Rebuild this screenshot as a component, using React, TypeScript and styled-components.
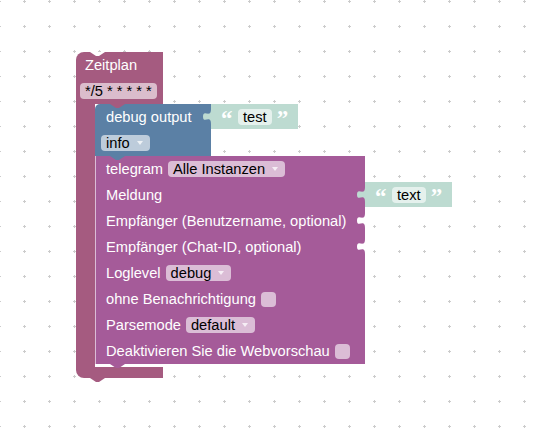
import React from 'react';
import styled, { createGlobalStyle } from 'styled-components';

const C = {
  schedule: '#a55b80',
  scheduleField: '#dbbdcc',
  debug: '#5b80a5',
  debugField: '#bdccdb',
  telegram: '#a55b99',
  telegramField: '#dbbdd6',
  text: '#bddbd1',
  textField: '#e5f1ed',
};

const GlobalStyle = createGlobalStyle`
  html, body { margin: 0; padding: 0; background: #fff; }
  body { font-family: "Liberation Sans", Arial, sans-serif; }
  * { box-sizing: border-box; }
`;

const Workspace = styled.div`
  position: relative;
  width: 535px;
  height: 444px;
  overflow: hidden;
  background: #fff;
`;

const GridLayer = styled.svg`
  position: absolute;
  inset: 0;
  width: 100%;
  height: 100%;
  display: block;
`;

const Script = styled.div`
  position: absolute;
  left: 76px;
  top: 52px;
  display: flex;
  flex-direction: column;
`;

const ScheduleHead = styled.div`
  position: relative;
  width: 87px;
  height: 52px;
  background: ${C.schedule};
  border-top-left-radius: 8px;
  display: flex;
  flex-direction: column;
`;

const HeadRow = styled.div<{ $pad: number }>`
  height: 26px;
  display: flex;
  align-items: center;
  padding-left: ${(p) => p.$pad}px;
`;

const ScheduleBody = styled.div`
  display: flex;
  align-items: stretch;
`;

const Arm = styled.div`
  width: 19px;
  background: ${C.schedule};
`;

const Stack = styled.div`
  display: flex;
  flex-direction: column;
  align-items: flex-start;
  padding-bottom: 3px;
`;

const ScheduleFoot = styled.div`
  position: relative;
  width: 87px;
  height: 11px;
  background: ${C.schedule};
  border-bottom-left-radius: 8px;
`;

const Notch = styled.span<{ $color: string; $kind: 'dip' | 'bump'; $offset?: number }>`
  position: absolute;
  left: ${(p) => p.$offset ?? 15}px;
  width: 15px;
  height: 4px;
  background: ${(p) => p.$color};
  clip-path: polygon(0 0, 100% 0, 60% 100%, 40% 100%);
  z-index: 3;
  ${(p) => (p.$kind === 'dip' ? 'top: 0;' : 'bottom: -4px;')}
`;

const Block = styled.div<{ $color: string; $width: number; $rounded?: boolean; $highlight?: boolean }>`
  position: relative;
  width: ${(p) => p.$width}px;
  background: ${(p) => p.$color};
  display: flex;
  flex-direction: column;
  border-top-left-radius: ${(p) => (p.$rounded ? 5 : 0)}px;
  box-shadow: ${(p) => (p.$highlight ? 'inset 1px 0 0 rgba(255,255,255,0.6)' : 'none')};
`;

const InputRow = styled.div<{ $pad: number; $h?: number }>`
  position: relative;
  height: ${(p) => p.$h ?? 26}px;
  display: flex;
  align-items: center;
  gap: 5px;
  padding-left: ${(p) => p.$pad}px;
  white-space: nowrap;
`;

const Label = styled.span`
  color: #fff;
  font-size: 14.67px;
  line-height: 16px;
`;

const Field = styled.span<{ $bg: string }>`
  display: inline-flex;
  align-items: center;
  height: 16px;
  padding: 0 5px;
  border-radius: 4px;
  background: ${(p) => p.$bg};
  color: #000;
  font-size: 14.67px;
  line-height: 16px;
`;

const DropField = styled(Field)`
  padding-right: 7px;
`;

const DropArrow = styled.span`
  display: inline-block;
  width: 0;
  height: 0;
  margin-left: 7px;
  border-left: 3px solid transparent;
  border-right: 3px solid transparent;
  border-top: 4px solid rgba(255, 255, 255, 0.75);
`;

const CheckBox = styled.span<{ $bg: string }>`
  display: inline-block;
  width: 15px;
  height: 15px;
  border-radius: 4px;
  background: ${(p) => p.$bg};
`;

const ValueBlock = styled.div`
  position: absolute;
  left: 100%;
  top: 0;
  height: 25px;
  display: flex;
  align-items: center;
  padding: 0 9px 0 10px;
  background: ${C.text};
  z-index: 2;
`;

const Quote = styled.span<{ $close?: boolean }>`
  width: 12px;
  height: 25px;
  margin-right: ${(p) => (p.$close ? 0 : 5)}px;
  margin-left: ${(p) => (p.$close ? 5 : 0)}px;
  color: #fff;
  font-family: "Liberation Serif", "Times New Roman", serif;
  font-weight: bold;
  font-size: 23px;
  line-height: 30px;
  text-align: left;
  overflow: visible;
`;

const TabShape = styled.svg<{ $side: 'in' | 'out' }>`
  position: absolute;
  top: 0;
  width: 8px;
  height: 20px;
  display: block;
  ${(p) => (p.$side === 'out' ? 'left: -8px;' : 'right: 0;')}
`;

const TAB_PATH = 'M8,5 C8,15 0,4.5 0,12.5 S8,10 8,20 Z';

function Tab({ side, fill }: { side: 'in' | 'out'; fill: string }) {
  return (
    <TabShape $side={side} viewBox="0 0 8 20" aria-hidden>
      <path d={TAB_PATH} fill={fill} />
    </TabShape>
  );
}

function TextValue({ value }: { value: string }) {
  return (
    <ValueBlock>
      <Tab side="out" fill={C.text} />
      <Quote>“</Quote>
      <Field $bg={C.textField}>{value}</Field>
      <Quote $close>”</Quote>
    </ValueBlock>
  );
}

function Dropdown({ bg, children }: { bg: string; children: React.ReactNode }) {
  return (
    <DropField $bg={bg}>
      {children}
      <DropArrow />
    </DropField>
  );
}

function Grid() {
  return (
    <GridLayer aria-hidden>
      <defs>
        <pattern id="ws-grid" width="25" height="25" patternUnits="userSpaceOnUse" x="12" y="-11">
          <rect x="11" y="12" width="3" height="1" fill="#cccccc" />
          <rect x="12" y="11" width="1" height="3" fill="#cccccc" />
        </pattern>
      </defs>
      <rect width="100%" height="100%" fill="url(#ws-grid)" />
    </GridLayer>
  );
}

export default function App() {
  return (
    <>
      <GlobalStyle />
      <Workspace>
        <Grid />
        <Script>
          <ScheduleHead>
            <Notch $kind="dip" $color="#fff" $offset={14} />
            <HeadRow $pad={9}>
              <Label>Zeitplan</Label>
            </HeadRow>
            <HeadRow $pad={4}>
              <Field $bg={C.scheduleField}>*/5 * * * * *</Field>
            </HeadRow>
          </ScheduleHead>
          <ScheduleBody>
            <Arm />
            <Stack>
              <Block $color={C.debug} $width={116} $rounded>
                <Notch $kind="dip" $color={C.schedule} />
                <InputRow $pad={11}>
                  <Label>debug output</Label>
                  <TextValue value="test" />
                </InputRow>
                <InputRow $pad={6}>
                  <Dropdown bg={C.debugField}>info</Dropdown>
                </InputRow>
                <Notch $kind="bump" $color={C.debug} />
              </Block>
              <Block $color={C.telegram} $width={270} $highlight>
                <InputRow $pad={11}>
                  <Label>telegram</Label>
                  <Dropdown bg={C.telegramField}>Alle Instanzen</Dropdown>
                </InputRow>
                <InputRow $pad={11}>
                  <Label>Meldung</Label>
                  <TextValue value="text" />
                </InputRow>
                <InputRow $pad={11}>
                  <Label>Empfänger (Benutzername, optional)</Label>
                  <Tab side="in" fill="#fff" />
                </InputRow>
                <InputRow $pad={11}>
                  <Label>Empfänger (Chat-ID, optional)</Label>
                  <Tab side="in" fill="#fff" />
                </InputRow>
                <InputRow $pad={11}>
                  <Label>Loglevel</Label>
                  <Dropdown bg={C.telegramField}>debug</Dropdown>
                </InputRow>
                <InputRow $pad={11}>
                  <Label>ohne Benachrichtigung</Label>
                  <CheckBox $bg={C.telegramField} />
                </InputRow>
                <InputRow $pad={11}>
                  <Label>Parsemode</Label>
                  <Dropdown bg={C.telegramField}>default</Dropdown>
                </InputRow>
                <InputRow $pad={11}>
                  <Label>Deaktivieren Sie die Webvorschau</Label>
                  <CheckBox $bg={C.telegramField} />
                </InputRow>
                <Notch $kind="bump" $color={C.telegram} />
              </Block>
            </Stack>
          </ScheduleBody>
          <ScheduleFoot>
            <Notch $kind="bump" $color={C.schedule} $offset={14} />
          </ScheduleFoot>
        </Script>
      </Workspace>
    </>
  );
}
